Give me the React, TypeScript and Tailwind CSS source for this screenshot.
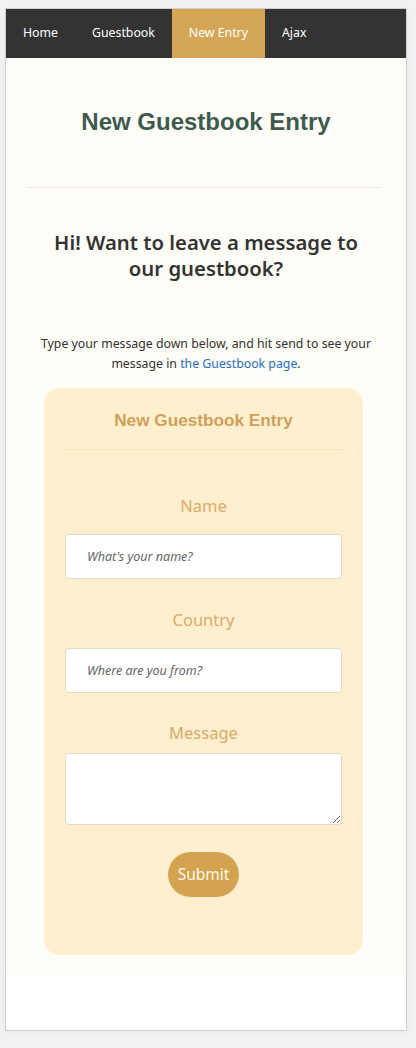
import React from 'react';

const navItems = ['Home', 'Guestbook', 'New Entry', 'Ajax'];

const body = "font-['Noto_Sans','Open_Sans',sans-serif]";
const display = "font-['Liberation_Sans',sans-serif]";

const Field: React.FC<{ label: string; placeholder: string; first?: boolean }> = ({ label, placeholder, first }) => (
  <div className={`flex flex-col ${first ? 'mt-[44px]' : 'mt-[29px]'}`}>
    <label className="text-center text-[16.5px] leading-[24px] text-[#d8ab6a]">{label}</label>
    <input
      placeholder={placeholder}
      className="mt-[16px] h-[45px] rounded-[4px] border border-[#e2d9c9] bg-white px-[21px] text-[12.5px] italic placeholder:text-[#666] outline-none"
    />
  </div>
);

export default function App() {
  return (
    <div className={`min-h-[1048px] bg-[#f2f2f2] pt-[8px] ${body}`}>
      <div className="ml-[5px] w-[402px] border border-[#cfcfcf] bg-white shadow-[0_2px_8px_rgba(0,0,0,0.04)]">
        <nav className="flex h-[49px] bg-[#333333]">
          {navItems.map(item => (
            <a
              key={item}
              className={`flex items-center px-[17px] text-[12.3px] text-white ${item === 'New Entry' ? 'bg-[#d4a656]' : ''}`}
            >
              {item}
            </a>
          ))}
        </nav>

        <main className="flex flex-col bg-[#fffdf7] pb-[19px]">
          <h1 className={`mt-[48px] text-center text-[24px] font-bold leading-[32px] text-[#3e5a4f] ${display}`}>
            New Guestbook Entry
          </h1>
          <hr className="ml-[21px] mr-[25px] mt-[49px] border-t border-[#ece9e0]" />

          <h2 className="mx-[40px] mt-[41px] text-center text-[20.3px] font-semibold leading-[26px] text-[#333]">
            Hi! Want to leave a message to our guestbook?
          </h2>
          <p className="mx-[30px] mt-[53px] text-center text-[12.3px] leading-[20px] text-[#333]">
            Type your message down below, and hit send to see your message in{' '}
            <a className="text-[#1f6fc5]">the Guestbook page</a>.
          </p>

          <form className="ml-[38px] mt-[14px] flex w-[319px] flex-col rounded-[16px] bg-[#ffefcf] px-[21px] pb-[58px] pt-[20px]">
            <h3 className={`text-center text-[17.2px] font-bold leading-[24px] text-[#cfa05a] ${display}`}>
              New Guestbook Entry
            </h3>
            <hr className="mt-[17px] border-t border-[#f2dfba]" />

            <Field label="Name" placeholder="What's your name?" first />
            <Field label="Country" placeholder="Where are you from?" />

            <div className="mt-[28px] flex flex-col">
              <label className="text-center text-[16.5px] leading-[24px] text-[#d8ab6a]">Message</label>
              <textarea className="mt-[8px] h-[72px] rounded-[4px] border border-[#e2d9c9] bg-white outline-none" />
            </div>

            <button
              type="button"
              className="mx-auto mt-[27px] h-[45px] w-[71px] rounded-full bg-[#d3a350] text-[15.5px] text-[#fff9ea]"
            >
              Submit
            </button>
          </form>
        </main>
        <div className="h-[56px] bg-white" />
      </div>
    </div>
  );
}
